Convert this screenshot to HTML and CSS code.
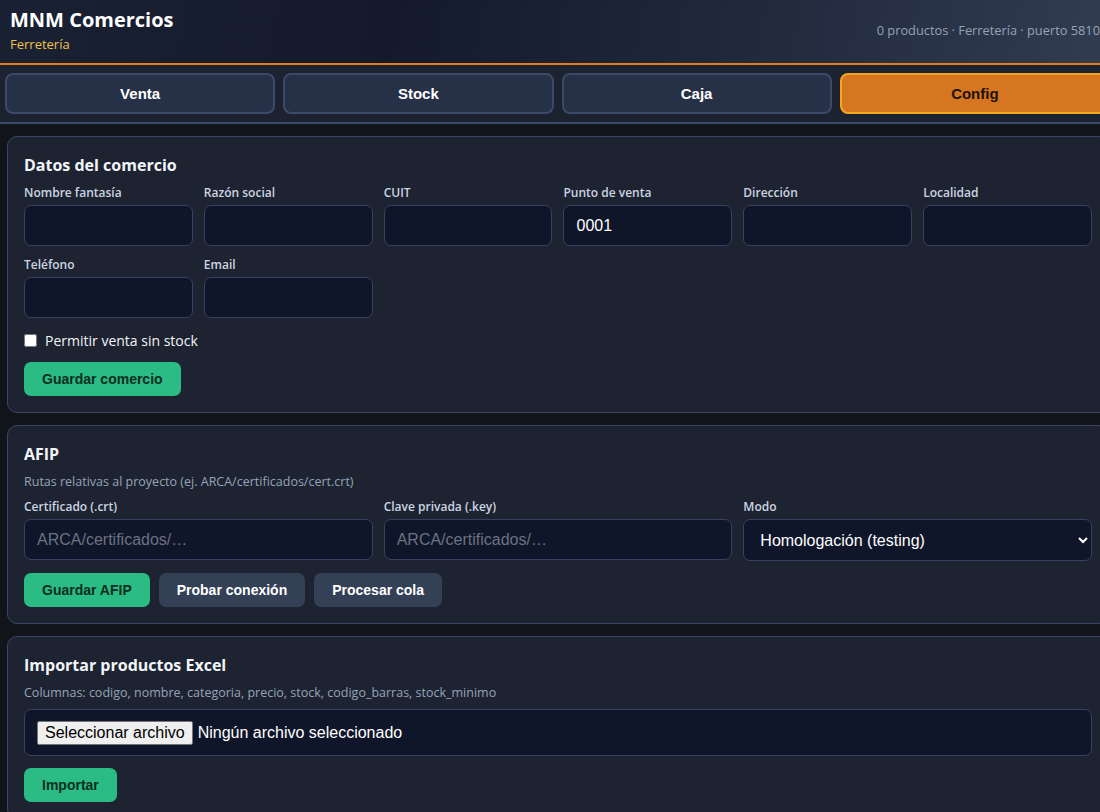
FILE: index.html
```html
<!DOCTYPE html>
<html lang="es">
<head>
<meta charset="utf-8">
<title>MNM Comercios</title>
<link rel="stylesheet" href="styles.css">
</head>
<body>
<div class="app">
  <header class="topbar">
    <div class="brand">
      <div class="brand-name">MNM Comercios</div>
      <div class="brand-sub">Ferretería</div>
    </div>
    <div class="status">0 productos · Ferretería · puerto 5810</div>
  </header>
  <nav class="tabs">
    <button class="tab">Venta</button>
    <button class="tab">Stock</button>
    <button class="tab">Caja</button>
    <button class="tab active">Config</button>
  </nav>
  <main class="content">
    <section class="card">
      <h2 class="card-title">Datos del comercio</h2>
      <div class="grid6">
        <label class="field"><span class="lbl">Nombre fantasía</span><input class="inp" type="text"></label>
        <label class="field"><span class="lbl">Razón social</span><input class="inp" type="text"></label>
        <label class="field"><span class="lbl">CUIT</span><input class="inp" type="text"></label>
        <label class="field"><span class="lbl">Punto de venta</span><input class="inp" type="text" value="0001"></label>
        <label class="field"><span class="lbl">Dirección</span><input class="inp" type="text"></label>
        <label class="field"><span class="lbl">Localidad</span><input class="inp" type="text"></label>
        <label class="field"><span class="lbl">Teléfono</span><input class="inp" type="text"></label>
        <label class="field"><span class="lbl">Email</span><input class="inp" type="text"></label>
      </div>
      <label class="check"><input type="checkbox" class="cb"> Permitir venta sin stock</label>
      <div class="actions">
        <button class="btn btn-green">Guardar comercio</button>
      </div>
    </section>

    <section class="card">
      <h2 class="card-title">AFIP</h2>
      <p class="hint">Rutas relativas al proyecto (ej. ARCA/certificados/cert.crt)</p>
      <div class="grid3">
        <label class="field"><span class="lbl">Certificado (.crt)</span><input class="inp" type="text" placeholder="ARCA/certificados/…"></label>
        <label class="field"><span class="lbl">Clave privada (.key)</span><input class="inp" type="text" placeholder="ARCA/certificados/…"></label>
        <label class="field"><span class="lbl">Modo</span>
          <select class="inp sel">
            <option>Homologación (testing)</option>
            <option>Producción</option>
          </select>
        </label>
      </div>
      <div class="actions">
        <button class="btn btn-green">Guardar AFIP</button>
        <button class="btn btn-gray">Probar conexión</button>
        <button class="btn btn-gray">Procesar cola</button>
      </div>
    </section>

    <section class="card">
      <h2 class="card-title">Importar productos Excel</h2>
      <p class="hint">Columnas: codigo, nombre, categoria, precio, stock, codigo_barras, stock_minimo</p>
      <div class="filebox">
        <input type="file" id="excel" class="file-hidden">
        <label for="excel" class="filebtn">Seleccionar archivo</label>
        <span class="filename">Ningún archivo seleccionado</span>
      </div>
      <div class="actions">
        <button class="btn btn-green">Importar</button>
      </div>
    </section>
  </main>
</div>
</body>
</html>
```
FILE: styles.css
```css
html, body {
  margin: 0;
  padding: 0;
  overflow: hidden;
  background: #111418;
}
body {
  font-family: "Open Sans", "Noto Sans", sans-serif;
  color: #e5e7eb;
}
.app {
  width: 1116px;
  min-height: 812px;
  background: #111418;
}
.topbar {
  height: 65px;
  box-sizing: border-box;
  padding: 7px 16px 0 10px;
  display: flex;
  justify-content: space-between;
  align-items: flex-start;
  background: linear-gradient(100deg, #1a2133 0%, #141a2c 35%, #222a3e 70%, #323d52 100%);
  border-bottom: 2px solid #e07f1f;
}
.brand-name {
  font-family: "Open Sans", sans-serif;
  font-weight: 700;
  font-size: 20px;
  line-height: 26px;
  color: #ffffff;
}
.brand-sub {
  font-size: 13px;
  line-height: 18px;
  margin-top: 2px;
  color: #f2c14e;
}
.status {
  margin-top: 14px;
  font-size: 12.8px;
  color: #94a3b8;
}
.tabs {
  display: flex;
  gap: 8px;
  padding: 8px 6px 8px 5px;
  background: #1d2230;
  border-bottom: 2px solid #3c4a6a;
}
.tab {
  flex: 1;
  box-sizing: border-box;
  height: 41px;
  border: 2px solid #3c4a6a;
  border-radius: 8px;
  background: #263046;
  color: #ffffff;
  font-family: "Liberation Sans", Arial, sans-serif;
  font-weight: 700;
  font-size: 15px;
  cursor: pointer;
}
.tab.active {
  background: #d67620;
  border-color: #f5a623;
  color: #1a1205;
}
.content {
  padding: 12px 7px 0 7px;
  display: flex;
  flex-direction: column;
  gap: 12px;
}
.card {
  background: #1e2331;
  border: 1px solid #3a4665;
  border-radius: 10px;
  padding: 16px;
}
.card-title {
  margin: 0 0 7px 0;
  font-family: "Open Sans", sans-serif;
  font-size: 16px;
  line-height: 24px;
  font-weight: 700;
  color: #f1f5f9;
}
.hint {
  margin: 0 0 7px 0;
  font-size: 12.5px;
  line-height: 18px;
  color: #94a3b8;
}
.grid6 {
  display: grid;
  grid-template-columns: repeat(6, 1fr);
  column-gap: 11px;
  row-gap: 10px;
}
.grid3 {
  display: grid;
  grid-template-columns: repeat(3, 1fr);
  column-gap: 11px;
}
.field {
  display: flex;
  flex-direction: column;
  gap: 4px;
  min-width: 0;
}
.lbl {
  font-size: 12px;
  line-height: 17px;
  font-weight: 600;
  color: #cbd5e1;
}
.inp {
  box-sizing: border-box;
  width: 100%;
  height: 41px;
  padding: 0 12px;
  background: #10162a;
  border: 1px solid #364262;
  border-radius: 7px;
  color: #ffffff;
  font-family: "Liberation Sans", Arial, sans-serif;
  font-size: 16px;
  outline: none;
}
.inp::placeholder {
  color: #6b7280;
}
.sel {
  height: 42px;
  padding: 0 12px;
  appearance: auto;
}
.check {
  display: flex;
  align-items: center;
  gap: 8px;
  margin-top: 13px;
  font-size: 14px;
  color: #f1f5f9;
}
.cb {
  margin: 0;
  width: 13px;
  height: 13px;
}
.actions {
  display: flex;
  gap: 9px;
  margin-top: 12px;
}
.btn {
  height: 34px;
  padding: 0 18px;
  border: none;
  border-radius: 7px;
  font-family: "Liberation Sans", Arial, sans-serif;
  font-weight: 700;
  font-size: 14px;
  cursor: pointer;
}
.btn-green {
  background: #2bbb84;
  color: #0c2e1e;
}
.btn-gray {
  background: #344055;
  color: #ffffff;
}
.filebox {
  box-sizing: border-box;
  height: 47px;
  padding: 0 12px;
  display: flex;
  align-items: center;
  gap: 5px;
  background: #10162a;
  border: 1px solid #364262;
  border-radius: 7px;
  font-family: "Liberation Sans", Arial, sans-serif;
  font-size: 16px;
}
.file-hidden {
  display: none;
}
.filebtn {
  background: #efefef;
  color: #000000;
  border: 1px solid #767676;
  border-radius: 2px;
  padding: 2px 7px;
  line-height: 18px;
  cursor: pointer;
}
.filename {
  color: #ffffff;
}
```
